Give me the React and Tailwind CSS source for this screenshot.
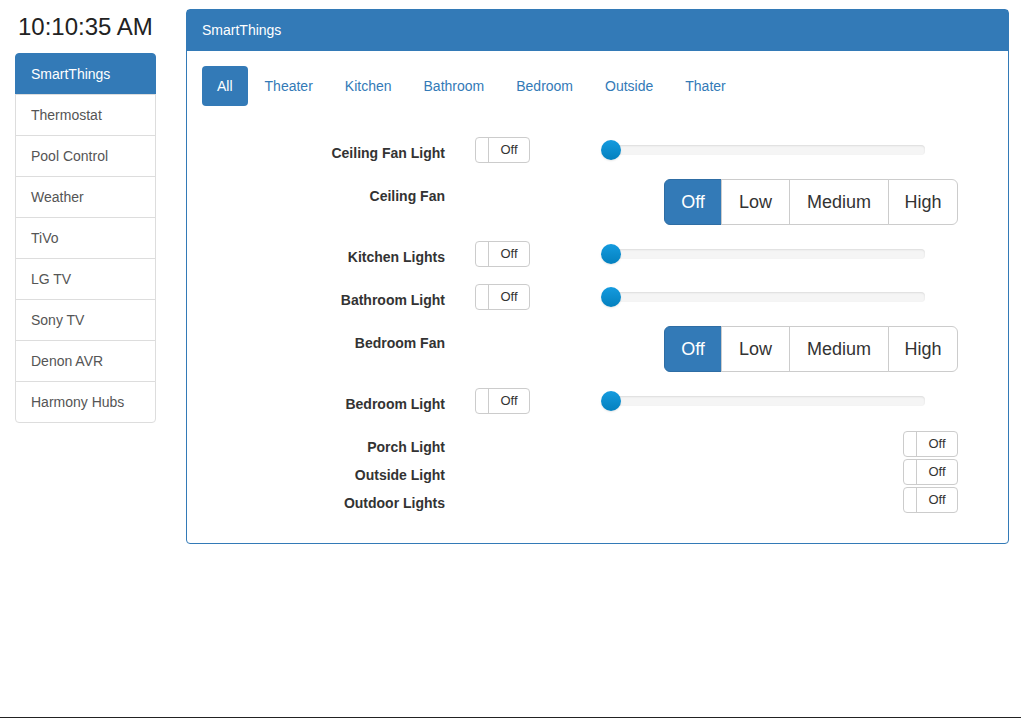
import { useState } from "react";

const menu = [
  "SmartThings",
  "Thermostat",
  "Pool Control",
  "Weather",
  "TiVo",
  "LG TV",
  "Sony TV",
  "Denon AVR",
  "Harmony Hubs",
];

const tabs = ["All", "Theater", "Kitchen", "Bathroom", "Bedroom", "Outside", "Thater"];

const Toggle = () => (
  <div className="flex h-[26px] w-[55px] rounded border border-[#ccc] bg-white">
    <span className="w-[13px] border-r border-[#ccc]" />
    <span className="flex flex-1 items-center justify-center text-[13px] text-[#333]">Off</span>
  </div>
);

const Slider = () => (
  <div className="relative h-[20px] w-[324px]">
    <div className="absolute left-[4px] right-0 top-[5px] h-[10px] rounded bg-[#f5f5f5] shadow-[inset_0_1px_2px_rgba(0,0,0,0.1)]" />
    <div className="absolute left-0 top-0 h-[20px] w-[20px] rounded-full bg-gradient-to-b from-[#149bdf] to-[#0480be] shadow-[0_1px_2px_rgba(0,0,0,0.1)]" />
  </div>
);

const FanButtons = () => {
  const [speed, setSpeed] = useState("Off");
  return (
    <div className="flex h-[46px] text-[18px]">
      {["Off", "Low", "Medium", "High"].map((s, i) => (
        <button
          key={s}
          onClick={() => setSpeed(s)}
          className={
            (speed === s
              ? "bg-[#337ab7] border-[#2e6da4] text-white "
              : "bg-white border-[#ccc] text-[#333] ") +
            (i === 0 ? "rounded-l-md w-[58px] " : "-ml-px ") +
            (i === 3 ? "rounded-r-md w-[70px] " : "") +
            (i === 1 ? "w-[69px] " : "") +
            (i === 2 ? "w-[100px] " : "") +
            "border flex items-center justify-center"
          }
        >
          {s}
        </button>
      ))}
    </div>
  );
};

const Label = ({ children }) => (
  <div className="w-[258px] shrink-0 pt-[6px] text-right text-[14px] font-bold text-[#333]">{children}</div>
);

const DimmerRow = ({ label, className }) => (
  <div className={"flex items-center " + className}>
    <Label>{label}</Label>
    <div className="ml-[30px] w-[126px] shrink-0">
      <Toggle />
    </div>
    <Slider />
  </div>
);

const FanRow = ({ label, className }) => (
  <div className={"flex items-start " + className}>
    <div className="pt-[1px]">
      <Label>{label}</Label>
    </div>
    <div className="ml-auto mr-[50px]">
      <FanButtons />
    </div>
  </div>
);

const SwitchRow = ({ label }) => (
  <div className="flex h-[28px] items-center">
    <Label>{label}</Label>
    <div className="ml-auto mr-[50px]">
      <Toggle />
    </div>
  </div>
);

export default function App() {
  const [active, setActive] = useState("All");
  return (
    <div className="relative h-[718px] w-[1021px] bg-white font-['Liberation_Sans',Arial,sans-serif] text-[#333] border-b border-[#222]">
      <div className="flex gap-[30px] px-[15px] pt-[9px]">
        <aside className="w-[141px] shrink-0">
          <div className="mt-[1px] ml-[3px] text-[24px] leading-[34px] text-[#222]">10:10:35 AM</div>
          <div className="mt-[9px] text-[14px]">
            {menu.map((m, i) => (
              <div
                key={m}
                className={
                  (i === 0
                    ? "rounded-t bg-[#337ab7] border-[#337ab7] text-white "
                    : "-mt-px border-[#ddd] bg-white text-[#555] ") +
                  (i === menu.length - 1 ? "rounded-b " : "") +
                  "flex h-[42px] items-center border px-[15px] pt-[1px]"
                }
              >
                {m}
              </div>
            ))}
          </div>
        </aside>

        <section className="w-[823px] shrink-0 rounded border border-[#337ab7]">
          <div className="flex h-[41px] items-center bg-[#337ab7] px-[15px] text-[14px] text-white">SmartThings</div>
          <div className="px-[15px] pt-[15px] pb-[29px]">
            <div className="flex gap-[2px] text-[14px]">
              {tabs.map((t) => (
                <button
                  key={t}
                  onClick={() => setActive(t)}
                  className={
                    (active === t ? "bg-[#337ab7] text-white " : "text-[#337ab7] ") +
                    "h-[40px] rounded px-[15px]"
                  }
                >
                  {t}
                </button>
              ))}
            </div>

            <div className="-mx-[15px] mt-[30px] flex flex-col">
              <DimmerRow label="Ceiling Fan Light" className="h-[28px]" />
              <FanRow label="Ceiling Fan" className="mt-[15px] h-[46px]" />
              <DimmerRow label="Kitchen Lights" className="mt-[15px] h-[28px]" />
              <DimmerRow label="Bathroom Light" className="mt-[15px] h-[28px]" />
              <FanRow label="Bedroom Fan" className="mt-[15px] h-[46px]" />
              <DimmerRow label="Bedroom Light" className="mt-[15px] h-[28px]" />
              <div className="mt-[15px] flex flex-col">
                <SwitchRow label="Porch Light" />
                <SwitchRow label="Outside Light" />
                <SwitchRow label="Outdoor Lights" />
              </div>
            </div>
          </div>
        </section>
      </div>
    </div>
  );
}
